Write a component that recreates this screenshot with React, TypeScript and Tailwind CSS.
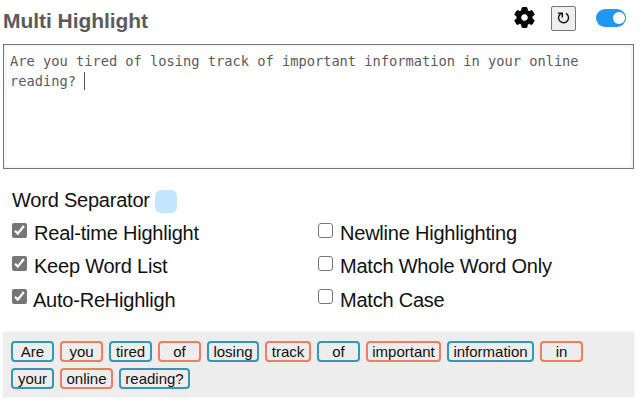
import { MdSettings } from 'react-icons/md';

const words: { text: string; width: string }[] = [
  { text: 'Are', width: 'w-[43px]' },
  { text: 'you', width: 'w-[43px]' },
  { text: 'tired', width: 'w-[43px]' },
  { text: 'of', width: 'w-[43px]' },
  { text: 'losing', width: 'w-[52px]' },
  { text: 'track', width: 'w-[46px]' },
  { text: 'of', width: 'w-[43px]' },
  { text: 'important', width: 'w-[75px]' },
  { text: 'information', width: 'w-[87px]' },
  { text: 'in', width: 'w-[43px]' },
  { text: 'your', width: 'w-[43px]' },
  { text: 'online', width: 'w-[53px]' },
  { text: 'reading?', width: 'w-[71px]' },
];

function Option({ label, checked = false, offset }: { label: string; checked?: boolean; offset: string }) {
  return (
    <label className="flex h-[33px] items-start">
      <span
        className={
          checked
            ? 'mt-[7px] flex h-[15px] w-[15px] items-center justify-center rounded-[2px] bg-[#767676]'
            : 'mt-[7px] h-[15px] w-[15px] rounded-[3px] border border-[#767676] bg-white'
        }
      >
        {checked && (
          <svg width="15" height="15" viewBox="0 0 15 15" fill="none" stroke="white" strokeWidth="2.3">
            <path d="M3 7.8 5.8 10.6 11.9 3" />
          </svg>
        )}
      </span>
      <span className={`${offset} whitespace-nowrap text-[20px] leading-[31px] tracking-[-0.22px]`}>{label}</span>
    </label>
  );
}

export default function App() {
  return (
    <div className="h-[400px] w-[640px] overflow-hidden bg-white pl-[3px] pr-[6px] font-['Liberation_Sans',Arial,sans-serif] text-[#111]">
      <header className="flex h-[44px] items-start">
        <h1 className="mt-[7px] whitespace-nowrap text-[21px] font-bold leading-[28px] tracking-[-0.05px] text-[#5b5b5b]">Multi Highlight</h1>
        <div className="ml-auto flex items-start pr-[8px]">
          <MdSettings className="mt-[4.5px] h-[25px] w-[25px] stroke-black stroke-[0.9] text-black [stroke-linejoin:round] [&>path[fill=none]]:stroke-none" />
          <button className="ml-[14px] mt-[6px] flex h-[25px] w-[25px] items-center justify-center rounded-[2px] border border-[#767676] bg-[#efefef]">
            <svg width="23" height="23" viewBox="0 0 23 23" fill="none" stroke="#111" strokeWidth="1.4">
              <path d="M14 6.4A5 5 0 1 1 8 7.2L9.9 6.4" />
              <path d="M5.8 6.1H10.3V10.4" />
            </svg>
          </button>
          <div className="ml-[20px] mt-[9px] flex h-[18px] w-[30px] items-center justify-end rounded-full bg-[#2196f3] pr-px">
            <span className="h-[12px] w-[12px] rounded-full bg-white" />
          </div>
        </div>
      </header>

      <div className="h-[125px] border border-[#767676] pl-[6px] pt-[6px] font-['DejaVu_Sans_Mono',monospace] text-[13.7px] leading-[20px] text-[#5b5b5b] shadow-[inset_0_0_5px_#0000001a]">
        <div className="whitespace-nowrap">Are you tired of losing track of important information in your online</div>
        <div className="flex">
          <span>reading?</span>
          <span className="ml-[8px] mt-px h-[18px] w-px bg-[#555]" />
        </div>
      </div>

      <section className="h-[163px] pl-[9px] pt-[16px]">
        <div className="flex h-[31px] items-center text-[20px] leading-[31px]">
          <span className="tracking-[-0.22px]">Word Separator</span>
          <span className="ml-[5px] mt-[2px] h-[23px] w-[22px] rounded-[6px] bg-[#c5e6ff]" />
        </div>
        <div className="grid grid-cols-[306px_1fr]">
          <Option label="Real-time Highlight" checked offset="ml-[7px] mt-[2px]" />
          <Option label="Newline Highlighting" offset="ml-[7px] mt-[2px]" />
          <Option label="Keep Word List" checked offset="ml-[7px] mt-[2px]" />
          <Option label="Match Whole Word Only" offset="ml-[7px] mt-[2px]" />
          <Option label="Auto-ReHighligh" checked offset="ml-[6px] mt-[3px]" />
          <Option label="Match Case" offset="ml-[7px] mt-[3px]" />
        </div>
      </section>

      <section className="flex h-[65px] flex-wrap content-start gap-x-[6px] gap-y-[6px] bg-[#ededed] pl-[8px] pr-[45px] pt-[9px] shadow-[0_0_5px_#0000000d]">
        {words.map(({ text, width }, index) => (
          <span
            key={index}
            className={`flex h-[21px] items-center justify-center whitespace-nowrap rounded-[4px] border-2 text-[15px] leading-[17px] ${
              index % 2 === 0 ? 'border-[#3498b0]' : 'border-[#f17c5f]'
            } ${width}`}
          >
            {text}
          </span>
        ))}
      </section>
    </div>
  );
}
